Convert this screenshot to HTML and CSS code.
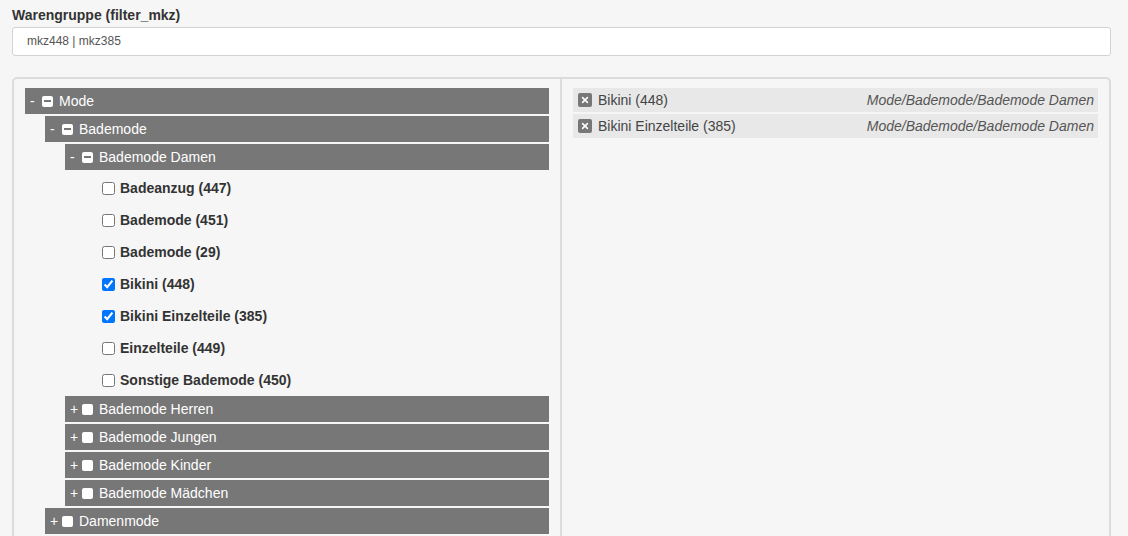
FILE: index.html
```html
<!DOCTYPE html>
<html lang="de">
<head>
<meta charset="utf-8">
<title>Warengruppe</title>
<link rel="stylesheet" href="styles.css">
</head>
<body>
<div class="page">
  <div class="field-label">Warengruppe (filter_mkz)</div>
  <div class="text-input">mkz448 | mkz385</div>
  <div class="panel">
    <div class="tree">
      <div class="node">
        <div class="node-row"><span class="toggle">-</span><span class="box partial"></span><span class="name">Mode</span></div>
        <div class="children">
          <div class="node">
            <div class="node-row"><span class="toggle">-</span><span class="box partial"></span><span class="name">Bademode</span></div>
            <div class="children">
              <div class="node">
                <div class="node-row"><span class="toggle">-</span><span class="box partial"></span><span class="name">Bademode Damen</span></div>
                <div class="children leaves">
                  <label class="leaf"><input type="checkbox"><span>Badeanzug (447)</span></label>
                  <label class="leaf"><input type="checkbox"><span>Bademode (451)</span></label>
                  <label class="leaf"><input type="checkbox"><span>Bademode (29)</span></label>
                  <label class="leaf"><input type="checkbox" checked><span>Bikini (448)</span></label>
                  <label class="leaf"><input type="checkbox" checked><span>Bikini Einzelteile (385)</span></label>
                  <label class="leaf"><input type="checkbox"><span>Einzelteile (449)</span></label>
                  <label class="leaf"><input type="checkbox"><span>Sonstige Bademode (450)</span></label>
                </div>
              </div>
              <div class="node">
                <div class="node-row"><span class="toggle">+</span><span class="box"></span><span class="name">Bademode Herren</span></div>
              </div>
              <div class="node">
                <div class="node-row"><span class="toggle">+</span><span class="box"></span><span class="name">Bademode Jungen</span></div>
              </div>
              <div class="node">
                <div class="node-row"><span class="toggle">+</span><span class="box"></span><span class="name">Bademode Kinder</span></div>
              </div>
              <div class="node">
                <div class="node-row"><span class="toggle">+</span><span class="box"></span><span class="name">Bademode Mädchen</span></div>
              </div>
            </div>
          </div>
          <div class="node">
            <div class="node-row"><span class="toggle">+</span><span class="box"></span><span class="name">Damenmode</span></div>
          </div>
        </div>
      </div>
    </div>
    <div class="selected">
      <div class="sel-row">
        <span class="remove"><svg width="14" height="14" viewBox="0 0 14 14"><path d="M4.6 4.6 L9.4 9.4 M9.4 4.6 L4.6 9.4" stroke="#fff" stroke-width="1.5" stroke-linecap="round"/></svg></span>
        <span class="sel-name">Bikini (448)</span>
        <span class="sel-path">Mode/Bademode/Bademode Damen</span>
      </div>
      <div class="sel-row">
        <span class="remove"><svg width="14" height="14" viewBox="0 0 14 14"><path d="M4.6 4.6 L9.4 9.4 M9.4 4.6 L4.6 9.4" stroke="#fff" stroke-width="1.5" stroke-linecap="round"/></svg></span>
        <span class="sel-name">Bikini Einzelteile (385)</span>
        <span class="sel-path">Mode/Bademode/Bademode Damen</span>
      </div>
    </div>
  </div>
</div>
</body>
</html>
```

FILE: styles.css
```css
* { box-sizing: border-box; }

html, body {
  margin: 0;
  background: #f6f6f6;
  font-family: "Liberation Sans", Arial, Helvetica, sans-serif;
  color: #333;
}

.page {
  padding: 5px 17px 0 12px;
}

.field-label {
  font-size: 14px;
  font-weight: bold;
  line-height: 20px;
  color: #333;
  margin-bottom: 2px;
}

.text-input {
  height: 29px;
  background: #fff;
  border: 1px solid #d3d3d3;
  border-radius: 3px;
  padding: 0 14px;
  font-size: 12px;
  line-height: 27px;
  color: #555;
}

.panel {
  margin-top: 21px;
  border: 2px solid #dcdcdc;
  border-radius: 5px;
  display: grid;
  grid-template-columns: 546px 1fr;
  min-height: 480px;
}

.tree {
  padding: 9px 11px;
}

.node-row {
  display: flex;
  align-items: center;
  height: 26px;
  background: #777;
  color: #fff;
  font-size: 14px;
  padding-left: 5px;
  margin-bottom: 2px;
}

.toggle {
  width: 12px;
  line-height: 26px;
}

.box {
  width: 11px;
  height: 11px;
  background: #fff;
  border-radius: 2px;
  margin-right: 6px;
  display: flex;
  align-items: center;
  justify-content: center;
}

.box.partial::after {
  content: "";
  width: 7px;
  height: 2px;
  background: #777;
}

.children {
  margin-left: 20px;
}

.leaves {
  display: flex;
  flex-direction: column;
}

.leaf {
  display: flex;
  align-items: center;
  height: 32px;
  padding-left: 17px;
  font-size: 14px;
  font-weight: bold;
  color: #333;
}

.leaf input {
  margin: 0 5px 0 0;
  width: 13px;
  height: 13px;
}

.selected {
  border-left: 2px solid #dcdcdc;
  padding: 9px 11px 9px 11px;
}

.sel-row {
  display: flex;
  align-items: center;
  height: 24px;
  background: #e8e8e8;
  margin-bottom: 2px;
  padding: 0 4px 0 5px;
  font-size: 14px;
}

.remove {
  width: 14px;
  height: 14px;
  background: #777;
  border-radius: 2px;
  display: flex;
  margin-right: 6px;
}

.sel-name {
  color: #444;
}

.sel-path {
  margin-left: auto;
  font-style: italic;
  color: #555;
}
```
